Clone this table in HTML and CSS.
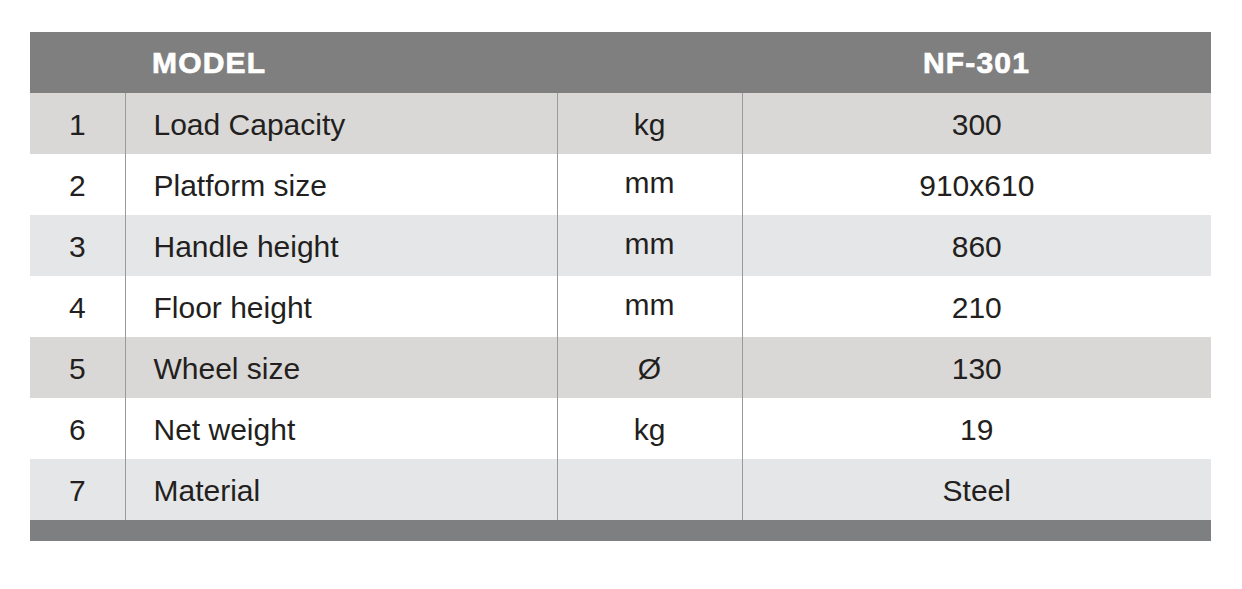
FILE: index.html
```html
<!DOCTYPE html>
<html>
<head>
<meta charset="utf-8">
<link rel="stylesheet" href="styles.css">
</head>
<body>
<table class="spec">
  <colgroup>
    <col class="c-num">
    <col class="c-label">
    <col class="c-unit">
    <col class="c-val">
  </colgroup>
  <thead>
    <tr class="head">
      <th></th>
      <th class="head-model" colspan="2">MODEL</th>
      <th class="head-val">NF-301</th>
    </tr>
  </thead>
  <tbody>
    <tr class="r-warm"><td class="num">1</td><td class="label">Load Capacity</td><td class="unit">kg</td><td class="val">300</td></tr>
    <tr class="r-white"><td class="num">2</td><td class="label">Platform size</td><td class="unit unit-up">mm</td><td class="val">910x610</td></tr>
    <tr class="r-cool"><td class="num">3</td><td class="label">Handle height</td><td class="unit unit-up">mm</td><td class="val">860</td></tr>
    <tr class="r-white"><td class="num">4</td><td class="label">Floor height</td><td class="unit unit-up">mm</td><td class="val">210</td></tr>
    <tr class="r-warm"><td class="num">5</td><td class="label">Wheel size</td><td class="unit">Ø</td><td class="val">130</td></tr>
    <tr class="r-white"><td class="num">6</td><td class="label">Net weight</td><td class="unit">kg</td><td class="val">19</td></tr>
    <tr class="r-cool"><td class="num">7</td><td class="label">Material</td><td class="unit"></td><td class="val">Steel</td></tr>
  </tbody>
  <tfoot>
    <tr class="foot"><td colspan="4"></td></tr>
  </tfoot>
</table>
</body>
</html>
```
FILE: styles.css
```css
html, body {
  margin: 0;
  padding: 0;
  background: #ffffff;
}
body {
  padding: 32px 0 0 30px;
  font-family: "Liberation Sans", Arial, sans-serif;
  color: #231f20;
}
.spec {
  border-collapse: collapse;
  table-layout: fixed;
  width: 1181px;
}
.c-num { width: 95px; }
.c-label { width: 432px; }
.c-unit { width: 185px; }
.c-val { width: 469px; }

.head th {
  background: #7f7f80;
  height: 61px;
  padding: 0;
  color: #ffffff;
  font-weight: bold;
  font-size: 30px;
  letter-spacing: 1.2px;
  -webkit-text-stroke: 0.7px #ffffff;
  vertical-align: middle;
}
.head-model {
  text-align: left;
  padding-left: 27px !important;
}
.head-val {
  text-align: center;
}

tbody td {
  height: 61px;
  padding: 2px 0 0 0;
  font-size: 30px;
  vertical-align: middle;
  box-sizing: border-box;
}
tbody td + td {
  border-left: 1px solid #9a9a9a;
}
.num { text-align: center; }
.label { text-align: left; padding-left: 28px !important; }
.unit { text-align: center; }
.unit-up { padding-top: 0 !important; padding-bottom: 3px !important; }
.val { text-align: center; }

.r-warm td { background: #d9d8d6; }
.r-cool td { background: #e5e6e7; }
.r-white td { background: #ffffff; }

.foot td {
  height: 21px;
  padding: 0;
  background: #7e7f81;
}
```
